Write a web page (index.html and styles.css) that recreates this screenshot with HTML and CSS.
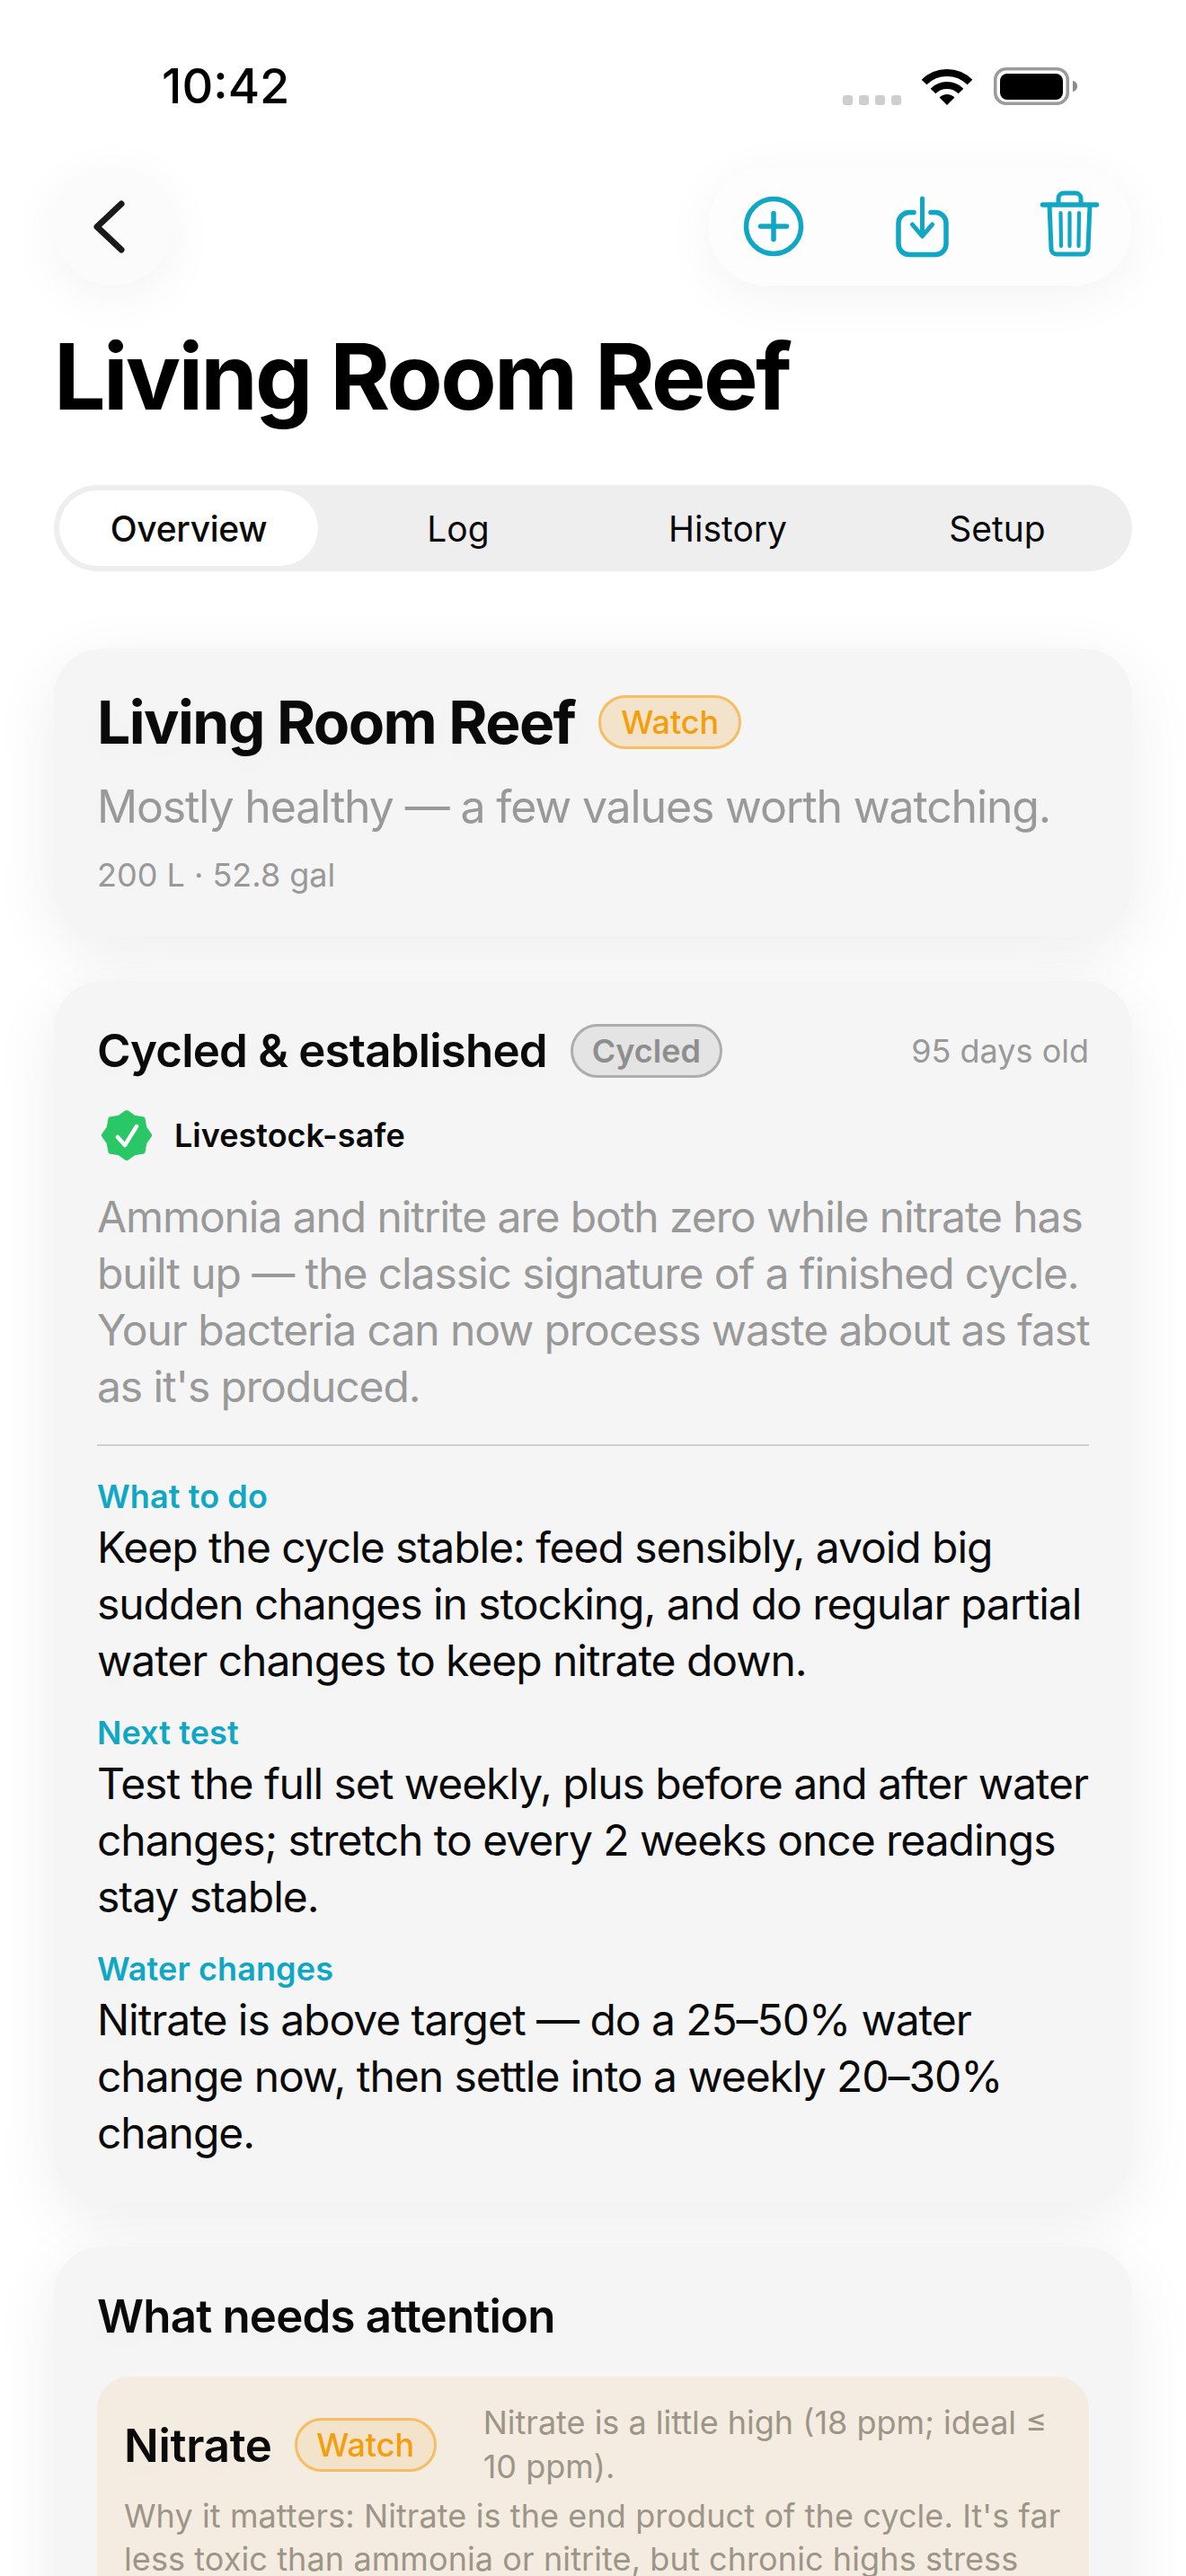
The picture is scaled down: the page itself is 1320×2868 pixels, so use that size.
FILE: index.html
```html
<!DOCTYPE html>
<html lang="en">
<head>
<meta charset="utf-8">
<title>Living Room Reef</title>
<link rel="stylesheet" href="styles.css">
</head>
<body>
<div class="screen">
  <header class="status">
    <span class="time">10:42</span>
    <div class="status-icons">
      <div class="signal"><i></i><i></i><i></i><i></i></div>
      <svg class="wifi" width="58" height="43" viewBox="0 0 58 43"><path d="M3.5 16.5A36 36 0 0 1 54.5 16.5" fill="none" stroke="#000" stroke-width="8"/><path d="M13.5 26.5A22 22 0 0 1 44.5 26.5" fill="none" stroke="#000" stroke-width="8"/><path d="M20.5 33.5A12 12 0 0 1 37.5 33.5L29 42Z" fill="#000"/></svg>
      <svg class="battery" width="94" height="42" viewBox="0 0 94 42"><rect x="1.75" y="1.75" width="80.5" height="38.5" rx="12" fill="#fff" stroke="#9b9b9b" stroke-width="3.5"/><rect x="7" y="7" width="70" height="29" rx="8" fill="#000"/><path d="M88 15c3 .5 5 3 5 6s-2 5.500-5 6Z" fill="#8a8a8a"/></svg>
    </div>
  </header>

  <nav class="toolbar">
    <button class="round-btn" type="button" aria-label="Back">
      <svg width="60" height="72" viewBox="0 0 60 72"><path d="M39 11 12 36.500 39 62" fill="none" stroke="#1a1a1a" stroke-width="7" stroke-linecap="round" stroke-linejoin="round"/></svg>
    </button>
    <div class="actions">
      <svg class="tool-icon" width="72" height="72" viewBox="0 0 72 72"><circle cx="36" cy="36" r="30.500" fill="none" stroke="#10a7c4" stroke-width="5.500"/><path d="M21.500 36h29M36 21.500v29" fill="none" stroke="#10a7c4" stroke-width="5.500" stroke-linecap="round"/></svg>
      <svg class="tool-icon" width="72" height="72" viewBox="0 0 72 72"><path d="M26 20.500h-5a12 12 0 0 0-12 12v23a12 12 0 0 0 12 12h29a12 12 0 0 0 12-12v-23a12 12 0 0 0-12-12h-5" fill="none" stroke="#10a7c4" stroke-width="5.500" stroke-linecap="round"/><path d="M35.500 5v41M24.500 34l11 13 11-13" fill="none" stroke="#10a7c4" stroke-width="5" stroke-linecap="round" stroke-linejoin="round"/></svg>
      <svg class="tool-icon" width="72" height="72" viewBox="0 0 72 72"><path d="M3.500 12h60" fill="none" stroke="#10a7c4" stroke-width="5.500" stroke-linecap="round"/><path d="M21 12V5a6 6 0 0 1 6-6h13a6 6 0 0 1 6 6v7" fill="none" stroke="#10a7c4" stroke-width="5"/><path d="M11 12l2 49a6 6 0 0 0 6 6h29a6 6 0 0 0 6-6l2-49" fill="none" stroke="#10a7c4" stroke-width="5"/><path d="M23.500 21l.5 37M33.500 21v37M44 21l-.5 37" fill="none" stroke="#10a7c4" stroke-width="4.200" stroke-linecap="round"/></svg>
    </div>
  </nav>

  <h1 class="page-title">Living Room Reef</h1>

  <div class="tabs">
    <a class="tab is-active"><span>Overview</span></a>
    <a class="tab"><span>Log</span></a>
    <a class="tab"><span>History</span></a>
    <a class="tab"><span>Setup</span></a>
  </div>

  <section class="card summary">
    <div class="row">
      <h2 class="card-title">Living Room Reef</h2>
      <span class="pill pill-watch">Watch</span>
    </div>
    <p class="lead">Mostly healthy — a few values worth watching.</p>
    <p class="meta">200 L · 52.8 gal</p>
  </section>

  <section class="card cycle">
    <div class="row cycle-head">
      <h3 class="section-title">Cycled &amp; established</h3>
      <span class="pill pill-cycled">Cycled</span>
      <span class="age">95 days old</span>
    </div>
    <div class="safe">
      <svg width="60" height="60" viewBox="0 0 60 60"><path d="M55 30 49.400 38 47.700 47.700 38 49.400 30 55 22 49.400 12.300 47.700 10.600 38 5 30 10.600 22 12.300 12.300 22 10.600 30 5 38 10.600 47.700 12.300 49.400 22Z" fill="#29c765" stroke="#29c765" stroke-width="6" stroke-linejoin="round"/><path d="M20 32 28 41 41 20" fill="none" stroke="#fff" stroke-width="4.500" stroke-linecap="round" stroke-linejoin="round"/></svg>
      <span>Livestock-safe</span>
    </div>
    <p class="para">Ammonia and nitrite are both zero while nitrate has<br>built up — the classic signature of a finished cycle.<br>Your bacteria can now process waste about as fast<br>as it's produced.</p>
    <hr class="divider">
    <h4 class="label">What to do</h4>
    <p class="body-text">Keep the cycle stable: feed sensibly, avoid big<br>sudden changes in stocking, and do regular partial<br>water changes to keep nitrate down.</p>
    <h4 class="label">Next test</h4>
    <p class="body-text">Test the full set weekly, plus before and after water<br>changes; stretch to every 2 weeks once readings<br>stay stable.</p>
    <h4 class="label">Water changes</h4>
    <p class="body-text">Nitrate is above target — do a 25–50% water<br>change now, then settle into a weekly 20–30%<br>change.</p>
  </section>

  <section class="card attention">
    <h3 class="section-title attention-title">What needs attention</h3>
    <div class="issue">
      <div class="issue-head">
        <span class="issue-name">Nitrate</span>
        <span class="pill pill-watch">Watch</span>
        <p class="issue-note">Nitrate is a little high (18 ppm; ideal ≤ 10 ppm).</p>
      </div>
      <p class="issue-why">Why it matters: Nitrate is the end product of the cycle. It's far less toxic than ammonia or nitrite, but chronic highs stress</p>
    </div>
  </section>
</div>
</body>
</html>
```

FILE: styles.css
```css
* { box-sizing: border-box; }
html, body { margin: 0; padding: 0; height: 2868px; overflow: hidden; background: #fff; }
body { font-family: Inter, "Liberation Sans", sans-serif; color: #0a0a0a; }
p, h1, h2, h3, h4 { margin: 0; }
.screen { width: 1320px; height: 2868px; overflow: hidden; padding: 0 60px; }

.status { height: 186px; padding: 6px 62px 0 120px; display: flex; align-items: center; justify-content: space-between; }
.time { font-size: 54px; font-weight: 500; color: #000; line-height: 1; }
.status-icons { display: flex; align-items: center; gap: 22px; }
.signal { display: flex; gap: 7px; margin-top: 30px; }
.signal i { display: block; width: 11px; height: 11px; border-radius: 3px; background: #cecece; }
.wifi { display: block; }
.battery { display: block; margin-right: -2px; margin-left: 1px; }

.toolbar { display: flex; justify-content: space-between; height: 132px; }
.round-btn { width: 132px; height: 132px; border: 0; padding: 0; border-radius: 50%; background: #fbfbfb; display: flex; align-items: center; justify-content: center; box-shadow: 0 12px 60px rgba(0,0,0,.05); }
.actions { width: 472px; height: 132px; padding: 0 31px 0 37px; border-radius: 66px; background: #fdfdfd; display: flex; align-items: center; justify-content: space-between; box-shadow: 0 12px 60px rgba(0,0,0,.05); }
.tool-icon { display: block; overflow: visible; }

.page-title { font-size: 102px; line-height: 124px; font-weight: 700; letter-spacing: -2.7px; margin-top: 39px; color: #000; }

.tabs { display: flex; height: 96px; margin-top: 59px; background: #eeeeee; border-radius: 48px; }
.tab { flex: 1; padding: 6px; display: flex; }
.tab span { flex: 1; display: flex; align-items: center; justify-content: center; border-radius: 42px; font-size: 39px; font-weight: 400; color: #0a0a0a; }
.tab.is-active span { background: #fff; font-weight: 500; letter-spacing: -.3px; }

.card { background: #f5f5f5; border-radius: 54px; padding: 48px; box-shadow: 0 18px 72px rgba(0,0,0,.075); text-shadow: 0 8px 36px rgba(0,0,0,.03); }
.summary { margin-top: 86px; height: 321px; padding-top: 46px; }
.cycle { margin-top: 49px; height: 1360px; padding-top: 46px; }
.attention { margin-top: 49px; height: 500px; padding-top: 46px; }

.row { display: flex; align-items: center; }
.card-title { font-size: 66px; line-height: 72px; font-weight: 700; letter-spacing: -1.6px; }
.pill { display: inline-flex; align-items: center; justify-content: center; height: 60px; border-radius: 30px; border: 3px solid; font-size: 36px; font-weight: 500; white-space: nowrap; }
.pill-watch { width: 159px; color: #f59e0b; background: #f3e3ca; border-color: #f5be64; }
.pill-cycled { width: 169px; color: #8e8e8e; background: #e4e4e4; border-color: #adadad; font-weight: 600; }
.summary .pill { margin-left: 26px; }
.lead { font-size: 50px; line-height: 63px; letter-spacing: -1.15px; color: #999; }
.summary .lead { margin-top: 27px; }
.meta { font-size: 36px; line-height: 48px; color: #999; margin-top: 20px; }

.section-title { font-size: 51px; line-height: 64px; font-weight: 600; letter-spacing: -.8px; }
.cycle-head .pill { margin-left: 26px; }
.age { margin-left: auto; font-size: 36px; color: #999; }
.safe { display: flex; align-items: center; gap: 23px; margin: 32px 0 0 3px; font-size: 36px; font-weight: 600; color: #0a0a0a; }
.safe svg { display: block; }
.para { font-size: 48px; line-height: 63px; letter-spacing: -1.1px; white-space: nowrap; color: #999; margin-top: 29px; }
.divider { border: 0; height: 2px; background: #cfcfcf; margin: 33px 0 0; }
.label { font-size: 36px; line-height: 44px; font-weight: 600; letter-spacing: .1px; color: #10a7c4; margin-top: 27px; }
.divider + .label { margin-top: 34px; }
.body-text { font-size: 48px; line-height: 63px; letter-spacing: -1.05px; white-space: nowrap; color: #0a0a0a; margin-top: 3px; }

.attention-title { line-height: 64px; }
.issue { margin-top: 35px; background: #f4ece0; border-radius: 36px; padding: 27px 30px 30px; min-height: 400px; }
.issue-head { display: flex; align-items: center; }
.issue-name { font-size: 51px; font-weight: 600; letter-spacing: -.3px; }
.issue-head .pill { margin-left: 25px; flex: none; width: 158px; }
.issue-note { margin-left: 52px; font-size: 36px; line-height: 49px; color: #9c9588; }
.issue-why { font-size: 36px; line-height: 48px; letter-spacing: .1px; color: #9c9588; margin-top: 6px; }
```
